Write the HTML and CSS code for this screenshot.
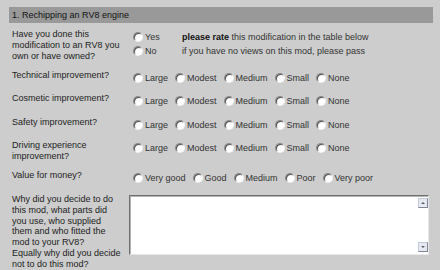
FILE: index.html
```html
<!DOCTYPE html>
<html lang="en">
<head>
    <meta charset="UTF-8">
    <title>RV8 modifications survey</title>
    <link rel="stylesheet" href="styles.css">
</head>
<body>
    <div class="survey">
        <div class="section-title">1. Rechipping an RV8 engine</div>

        <div class="row">
            <div class="question">Have you done this modification to an RV8 you own or have owned?</div>
            <div class="answer answer-done">
                <label class="choice"><input type="radio" name="done1">Yes</label>
                <span class="note"><b>please rate</b> this modification in the table below</span>
                <label class="choice"><input type="radio" name="done1">No</label>
                <span class="note">if you have no views on this mod, please pass</span>
            </div>
        </div>

        <div class="row">
            <div class="question">Technical improvement?</div>
            <div class="answer">
                <label class="choice"><input type="radio" name="tech1">Large</label>
                <label class="choice"><input type="radio" name="tech1">Modest</label>
                <label class="choice"><input type="radio" name="tech1">Medium</label>
                <label class="choice"><input type="radio" name="tech1">Small</label>
                <label class="choice"><input type="radio" name="tech1">None</label>
            </div>
        </div>

        <div class="row">
            <div class="question">Cosmetic improvement?</div>
            <div class="answer">
                <label class="choice"><input type="radio" name="cosm1">Large</label>
                <label class="choice"><input type="radio" name="cosm1">Modest</label>
                <label class="choice"><input type="radio" name="cosm1">Medium</label>
                <label class="choice"><input type="radio" name="cosm1">Small</label>
                <label class="choice"><input type="radio" name="cosm1">None</label>
            </div>
        </div>

        <div class="row">
            <div class="question">Safety improvement?</div>
            <div class="answer">
                <label class="choice"><input type="radio" name="safe1">Large</label>
                <label class="choice"><input type="radio" name="safe1">Modest</label>
                <label class="choice"><input type="radio" name="safe1">Medium</label>
                <label class="choice"><input type="radio" name="safe1">Small</label>
                <label class="choice"><input type="radio" name="safe1">None</label>
            </div>
        </div>

        <div class="row">
            <div class="question">Driving experience improvement?</div>
            <div class="answer">
                <label class="choice"><input type="radio" name="drive1">Large</label>
                <label class="choice"><input type="radio" name="drive1">Modest</label>
                <label class="choice"><input type="radio" name="drive1">Medium</label>
                <label class="choice"><input type="radio" name="drive1">Small</label>
                <label class="choice"><input type="radio" name="drive1">None</label>
            </div>
        </div>

        <div class="row">
            <div class="question">Value for money?</div>
            <div class="answer">
                <label class="choice"><input type="radio" name="value1">Very good</label>
                <label class="choice"><input type="radio" name="value1">Good</label>
                <label class="choice"><input type="radio" name="value1">Medium</label>
                <label class="choice"><input type="radio" name="value1">Poor</label>
                <label class="choice"><input type="radio" name="value1">Very poor</label>
            </div>
        </div>

        <div class="row">
            <div class="question">Why did you decide to do this mod, what parts did you use, who supplied them and who fitted the mod to your RV8?<br>Equally why did you decide not to do this mod?</div>
            <div class="answer answer-text">
                <div class="comment-box">
                    <textarea name="why1"></textarea>
                    <div class="scrollbar">
                        <span class="scroll-btn up"></span>
                        <span class="scroll-btn down"></span>
                    </div>
                </div>
            </div>
        </div>
    </div>
</body>
</html>
```

FILE: styles.css
```css
body {
    margin: 7px 7px 0 9px;
    background: #cdcdcd;
    font-family: "Liberation Sans", Arial, sans-serif;
    font-size: 9px;
    color: #222;
}

.section-title {
    height: 16px;
    line-height: 16px;
    padding-left: 3px;
    margin-bottom: 2px;
    background: #999;
    color: #111;
}

.row {
    display: grid;
    grid-template-columns: 120px 1fr;
    padding: 4px 0 4.5px;
}

.question {
    padding: 0 8px 0 3px;
    line-height: 10.8px;
}

.answer {
    align-self: start;
    display: flex;
    align-items: center;
    height: 14px;
    padding: 1px 0 0 4px;
    color: #333;
}

.answer-done {
    display: grid;
    grid-template-columns: 49px auto;
    height: auto;
}

.answer-done > * {
    height: 14px;
    line-height: 14px;
}

.note b {
    color: #111;
}

.choice {
    display: flex;
    align-items: center;
    margin-right: 7px;
}

.choice input {
    appearance: none;
    -webkit-appearance: none;
    width: 10px;
    height: 10px;
    margin: 0 2px 0 0;
    border-radius: 50%;
    border: 1px solid;
    border-color: #8a8a8a #f4f4f4 #f4f4f4 #8a8a8a;
    background: radial-gradient(circle at 60% 60%, #fff 40%, #e4e4e4 100%);
    box-shadow: inset 1px 1px 0 #505050;
}

/* comment box with a drawn scrollbar */
.answer-text {
    height: auto;
    padding-left: 0;
}

.comment-box {
    display: flex;
    width: 300px;
    height: 60px;
    box-sizing: border-box;
    background: #fff;
    border: 1px solid;
    border-color: #6f6f6f #e8e8e8 #e8e8e8 #6f6f6f;
    box-shadow: inset 1px 1px 0 #b4b4b4;
}

.comment-box textarea {
    flex: 1;
    border: none;
    resize: none;
    outline: none;
    background: transparent;
    font: inherit;
}

.scrollbar {
    display: flex;
    flex-direction: column;
    justify-content: space-between;
    padding: 2px 0 2px;
}

.scroll-btn {
    position: relative;
    width: 10px;
    height: 10px;
    box-sizing: border-box;
    background: #e6e9f0;
    border: 1px solid;
    border-color: #c3cad8 #7d8596 #7d8596 #c3cad8;
}

.scroll-btn::after {
    content: "";
    position: absolute;
    left: 2px;
    border-left: 2px solid transparent;
    border-right: 2px solid transparent;
}

.scroll-btn.up::after {
    top: 3px;
    border-bottom: 2px solid #5a5f6a;
}

.scroll-btn.down::after {
    top: 3px;
    border-top: 2px solid #5a5f6a;
}
```
